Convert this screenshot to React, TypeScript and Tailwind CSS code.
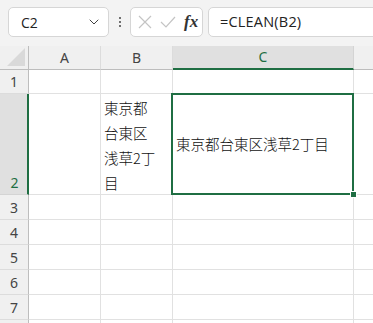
import { ChevronDown } from "lucide-react";

const cols = ["A", "B", "C"];
const rowH = ["h-[24px]", "h-[101px]", "h-[25px]", "h-[25px]", "h-[25px]", "h-[25px]", "h-[25px]", "h-[25px]"];

const App = () => {
  return (
    <div className="w-[373px] h-[323px] overflow-hidden bg-white relative font-['Noto_Sans',sans-serif]">
      {/* toolbar */}
      <div className="h-[46px] bg-[#f3f3f3] flex items-start pt-[7px] pl-[8px] overflow-hidden">
        <div className="w-[101px] h-[30px] bg-white border border-[#d6d6d6] rounded-[5px] flex items-center justify-between pl-[12px] pr-[6px] shrink-0">
          <span className="text-[14px] text-[#222] font-['Open_Sans',sans-serif]">C2</span>
          <ChevronDown size={16} strokeWidth={1.4} className="text-[#333]" />
        </div>
        <div className="w-[21px] h-[30px] flex flex-col items-center justify-center gap-[2px] shrink-0">
          <span className="w-[2px] h-[2px] bg-[#444] rounded-full" />
          <span className="w-[2px] h-[2px] bg-[#444] rounded-full" />
          <span className="w-[2px] h-[2px] bg-[#444] rounded-full" />
        </div>
        <div className="w-[73px] h-[30px] bg-white border border-[#d6d6d6] rounded-[5px] flex items-center pl-[6px] gap-[8px] shrink-0">
          <svg width="14" height="14" viewBox="0 0 14 14" className="ml-[1px]">
            <path d="M1 1 L13 13 M13 1 L1 13" stroke="#c4c4c4" strokeWidth="1.2" fill="none" />
          </svg>
          <svg width="16" height="14" viewBox="0 0 16 14">
            <path d="M1 7 L6 12 L15 2" stroke="#c4c4c4" strokeWidth="1.2" fill="none" />
          </svg>
          <span className="text-[17px] italic font-bold text-[#333] font-['Liberation_Serif',serif] leading-none -mt-[2px]">
            fx
          </span>
        </div>
        <div className="ml-[5px] h-[30px] flex-1 -mr-[20px] bg-white border border-[#d6d6d6] rounded-[5px] flex items-center pl-[11px]">
          <span className="text-[14.5px] text-[#222] font-['Open_Sans',sans-serif] tracking-[0.2px]">=CLEAN(B2)</span>
        </div>
      </div>

      {/* sheet */}
      <div className="grid grid-cols-[29px_72px_72px_181px_1fr]">
        <div className="h-[24px] bg-[#f0f0f0] border-r border-b border-[#bdbdbd] flex items-end justify-end pr-[3px] pb-[3px]">
          <svg width="18" height="18" viewBox="0 0 18 18">
            <path d="M18 0 L18 18 L0 18 Z" fill="#d9d9d9" />
          </svg>
        </div>
        {cols.map((c) => (
          <div
            key={c}
            className={
              c === "C"
                ? "h-[24px] bg-[#e0e0e0] border-r border-r-[#d4d4d4] border-b-2 border-b-[#1f6e43] flex items-center justify-center text-[14px] text-[#1f6e43]"
                : "h-[24px] bg-[#f0f0f0] border-r border-r-[#dcdcdc] border-b border-b-[#bdbdbd] flex items-center justify-center text-[14px] text-[#444]"
            }
          >
            <span className="mb-[1px]">{c}</span>
          </div>
        ))}
        <div className="h-[24px] bg-[#f0f0f0] border-b border-[#bdbdbd]" />

        {rowH.map((h, i) => {
          const n = i + 1;
          const sel = n === 2;
          return [
            <div
              key={`h${n}`}
              className={
                sel
                  ? `${h} bg-[#e0e0e0] border-r-2 border-r-[#1f6e43] border-b border-b-[#d4d4d4] flex items-end justify-center pb-[1px] text-[14px] text-[#1f6e43]`
                  : `${h} bg-[#f0f0f0] border-r border-r-[#bdbdbd] border-b border-b-[#dcdcdc] flex items-end justify-center pb-[1px] text-[14px] text-[#444]`
              }
            >
              {n < 8 && <span className={sel ? "pl-[2px]" : ""}>{n}</span>}
            </div>,
            <div key={`a${n}`} className={`${h} border-r border-b border-[#e1e1e1]`} />,
            <div
              key={`b${n}`}
              className={`${h} border-r border-b border-[#e1e1e1] font-['Noto_Sans_CJK_JP',sans-serif] font-light text-[14.5px] text-[#111] leading-[25px] pl-[3px] pt-[1px]`}
            >
              {sel && (
                <>
                  <div>東京都</div>
                  <div>台東区</div>
                  <div>浅草2丁</div>
                  <div>目</div>
                </>
              )}
            </div>,
            <div
              key={`c${n}`}
              className={`${h} border-r border-b border-[#e1e1e1] flex items-center pl-[3px] font-['Noto_Sans_CJK_JP',sans-serif] font-light text-[14.5px] text-[#111]`}
            >
              {sel && <span>東京都台東区浅草2丁目</span>}
            </div>,
            <div key={`d${n}`} className={`${h} border-b border-[#e1e1e1]`} />,
          ];
        })}
      </div>

      {/* selection */}
      <div className="absolute left-[171px] top-[93px] w-[183px] h-[102px] border-2 border-[#1f6e43] pointer-events-none" />
      <div className="absolute left-[350px] top-[191px] w-[7px] h-[7px] bg-[#1f6e43] border border-white" />
    </div>
  );
};

export default App;
